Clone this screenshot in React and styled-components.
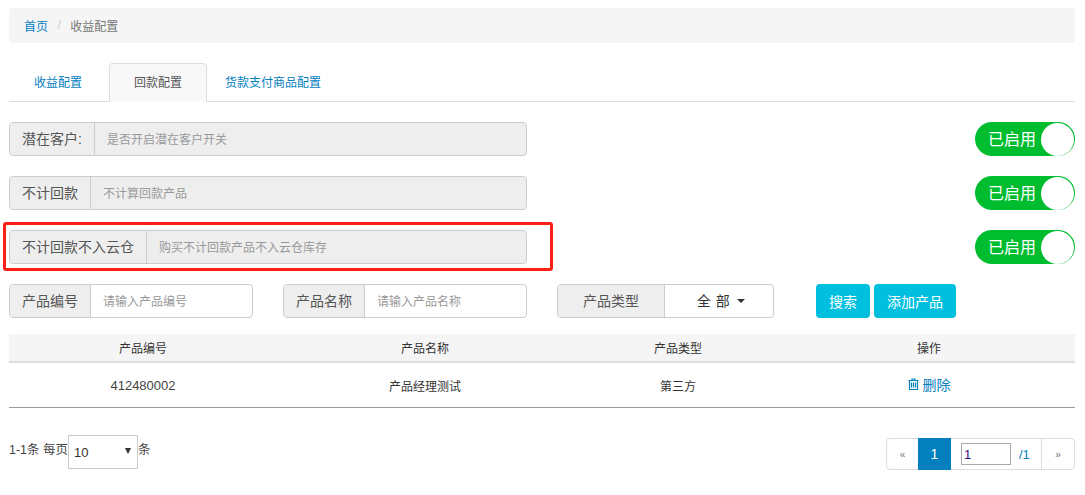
import React from 'react'
import styled, { createGlobalStyle } from 'styled-components'

const Global = createGlobalStyle`
    html, body {
        margin: 0;
        padding: 0;
        background: #fff;
        font-family: "Liberation Sans", "Noto Sans CJK SC", sans-serif;
        font-size: 13px;
        color: #333;
    }
    * { box-sizing: border-box; }
`
const Page = styled.div`
    width: 1085px;
    height: 495px;
    padding: 8px 10px 0 9px;
    overflow: hidden;
`
const Crumbs = styled.div`
    height: 35px;
    background: #f5f5f5;
    border-radius: 4px;
    padding: 0 15px 1px;
    display: flex;
    align-items: center;
    font-size: 12px;
`
const CrumbLink = styled.span`
    color: #0480be;
`
const CrumbSep = styled.span`
    color: #ccc;
    padding: 0 9.5px;
`
const CrumbNow = styled.span`
    color: #777;
`
const Tabs = styled.div`
    margin-top: 20px;
    height: 39px;
    display: flex;
    border-bottom: 1px solid #ddd;
`
const Tab = styled.div`
    height: 39px;
    padding: 0 24px 2px ${({$left}) => $left || 24}px;
    margin-right: 2px;
    display: flex;
    align-items: center;
    font-size: 12px;
    border-radius: 4px 4px 0 0;
    border: 1px solid ${({$active}) => $active ? '#ddd' : 'transparent'};
    border-bottom: 1px solid ${({$active}) => $active ? '#f8f8f8' : 'transparent'};
    background: ${({$active}) => $active ? '#f8f8f8' : 'transparent'};
    color: ${({$active}) => $active ? '#555' : '#0480be'};
`
const Settings = styled.div`
    margin-top: 20px;
    display: flex;
    flex-direction: column;
    gap: 20px;
`
const SettingRow = styled.div`
    position: relative;
    display: flex;
    justify-content: space-between;
    align-items: center;
    height: 34px;
`
const Group = styled.div`
    width: ${({$width}) => $width}px;
    height: 34px;
    display: flex;
    border: 1px solid #ccc;
    border-radius: 4px;
    overflow: hidden;
    background: ${({$disabled}) => $disabled ? '#eee' : '#fff'};
`
const Addon = styled.div`
    width: ${({$width}) => $width}px;
    flex: none;
    display: flex;
    align-items: center;
    justify-content: center;
    padding-bottom: 2px;
    background: #eee;
    border-right: 1px solid #ccc;
    color: #555;
    font-size: 14px;
    white-space: nowrap;
`
const Field = styled.div`
    flex: 1;
    display: flex;
    align-items: center;
    padding: 0 0 2px 12px;
    color: #999;
    font-size: 12px;
`
const Highlight = styled.div`
    position: absolute;
    left: -6px;
    top: -8px;
    width: 550px;
    height: 49px;
    border: 3px solid #fb1f14;
    border-radius: 3px;
    pointer-events: none;
`
const Switch = styled.div`
    width: 100px;
    height: 34px;
    border-radius: 17px;
    background: #00bc2f;
    display: flex;
    align-items: center;
    justify-content: space-between;
    padding: 0 1px 0 13px;
    color: #fff;
    font-size: 16px;
`
const SwitchLabel = styled.span`
    margin-top: -2px;
`
const Knob = styled.div`
    width: 33px;
    height: 33px;
    border-radius: 50%;
    background: #fff;
`
const Filters = styled.div`
    margin-top: 20px;
    height: 34px;
    display: flex;
    align-items: center;
`
const FilterGroup = styled(Group)`
    margin-right: 30px;
`
const TypeValue = styled.div`
    flex: 1;
    display: flex;
    align-items: center;
    justify-content: center;
    gap: 7px;
    padding: 0 0 2px 4px;
    color: #333;
    font-size: 14px;
    letter-spacing: 0.5px;
`
const Caret = styled.span`
    width: 0;
    height: 0;
    margin-top: 2px;
    border-top: 4px solid #333;
    border-left: 4px solid transparent;
    border-right: 4px solid transparent;
`
const Buttons = styled.div`
    display: flex;
    gap: 4px;
    margin-left: 12px;
`
const Button = styled.div`
    height: 34px;
    padding: 0 13px 1px;
    display: flex;
    align-items: center;
    background: #00bfdf;
    border-radius: 4px;
    color: #fff;
    font-size: 14px;
`
const Table = styled.div`
    margin-top: 16px;
    border-bottom: 1px solid #999;
`
const TableRow = styled.div`
    display: grid;
    grid-template-columns: 268px 296px 210px 292px;
    align-items: center;
    height: ${({$head}) => $head ? 29 : 44}px;
    background: ${({$head}) => $head ? '#f5f5f5' : '#fff'};
    border-bottom: ${({$head}) => $head ? '2px solid #ddd' : 'none'};
    font-size: 12px;
    color: #333;
`
const Cell = styled.div`
    text-align: center;
`
const Code = styled.span`
    font-size: 13px;
    color: #444;
`
const DeleteLink = styled.span`
    display: inline-flex;
    align-items: center;
    gap: 4px;
    margin-top: -2px;
    color: #0480be;
    font-size: 14px;
`
const Footer = styled.div`
    margin-top: 27px;
    display: flex;
    justify-content: space-between;
    align-items: flex-start;
`
const PageSize = styled.div`
    display: flex;
    align-items: flex-start;
    font-size: 12.5px;
    color: #444;
    line-height: 30px;
`
const SizeSelect = styled.div`
    width: 70px;
    height: 34px;
    border: 1px solid #ccc;
    display: flex;
    align-items: center;
    justify-content: space-between;
    padding: 2px 6px 0 5px;
    color: #333;
    font-size: 13px;
`
const SizeArrow = styled.span`
    width: 0;
    height: 0;
    margin-top: -4px;
    border-top: 6px solid #333;
    border-left: 3px solid transparent;
    border-right: 3px solid transparent;
`
const Pager = styled.div`
    margin-top: 3px;
    height: 32px;
    width: 189px;
    display: flex;
    border: 1px solid #ddd;
    border-radius: 4px;
`
const PagerArrow = styled.div`
    width: ${({$width}) => $width}px;
    flex: none;
    display: flex;
    align-items: center;
    justify-content: center;
    color: #777;
    font-size: 10px;
    border-left: ${({$split}) => $split ? '1px solid #ddd' : 'none'};
`
const PagerCurrent = styled.div`
    width: 33px;
    flex: none;
    margin: -1px 0;
    display: flex;
    align-items: center;
    justify-content: center;
    background: #0480be;
    color: #fff;
    font-size: 14px;
`
const PagerJump = styled.div`
    flex: 1;
    display: flex;
    align-items: center;
    padding-left: 10px;
    gap: 8px;
    font-size: 13px;
    color: #0480be;
`
const JumpInput = styled.div`
    width: 50px;
    height: 22px;
    border: 1px solid #a9a9a9;
    display: flex;
    align-items: center;
    padding-left: 2px;
    color: #3a0a80;
    font-size: 13px;
`

const settings = [
    { label: '潜在客户:', width: 85, text: '是否开启潜在客户开关' },
    { label: '不计回款', width: 81, text: '不计算回款产品' },
    { label: '不计回款不入云仓', width: 137, text: '购买不计回款产品不入云仓库存', marked: true },
]

function TrashIcon() {
    return (
        <svg width="11" height="12" viewBox="0 0 11 12" fill="none" stroke="#0480be" strokeWidth="1.2">
            <path d="M.5 2.5h10M4 2.5V1h3v1.5M1.5 2.5v9h8v-9M3.5 4.5v5M5.5 4.5v5M7.5 4.5v5" />
        </svg>
    )
}

function App() {
    return (
        <Page>
            <Global />
            <Crumbs>
                <CrumbLink>首页</CrumbLink>
                <CrumbSep>/</CrumbSep>
                <CrumbNow>收益配置</CrumbNow>
            </Crumbs>
            <Tabs>
                <Tab>收益配置</Tab>
                <Tab $active>回款配置</Tab>
                <Tab $left={15}>货款支付商品配置</Tab>
            </Tabs>
            <Settings>
                {settings.map((s) => (
                    <SettingRow key={s.label}>
                        <Group $width={518} $disabled>
                            <Addon $width={s.width}>{s.label}</Addon>
                            <Field>{s.text}</Field>
                        </Group>
                        <Switch>
                            <SwitchLabel>已启用</SwitchLabel>
                            <Knob />
                        </Switch>
                        {s.marked && <Highlight />}
                    </SettingRow>
                ))}
            </Settings>
            <Filters>
                <FilterGroup $width={244}>
                    <Addon $width={81}>产品编号</Addon>
                    <Field>请输入产品编号</Field>
                </FilterGroup>
                <FilterGroup $width={244}>
                    <Addon $width={81}>产品名称</Addon>
                    <Field>请输入产品名称</Field>
                </FilterGroup>
                <FilterGroup $width={217}>
                    <Addon $width={107}>产品类型</Addon>
                    <TypeValue>全 部 <Caret /></TypeValue>
                </FilterGroup>
                <Buttons>
                    <Button>搜索</Button>
                    <Button>添加产品</Button>
                </Buttons>
            </Filters>
            <Table>
                <TableRow $head>
                    <Cell>产品编号</Cell>
                    <Cell>产品名称</Cell>
                    <Cell>产品类型</Cell>
                    <Cell>操作</Cell>
                </TableRow>
                <TableRow>
                    <Cell><Code>412480002</Code></Cell>
                    <Cell>产品经理测试</Cell>
                    <Cell>第三方</Cell>
                    <Cell><DeleteLink><TrashIcon />删除</DeleteLink></Cell>
                </TableRow>
            </Table>
            <Footer>
                <PageSize>
                    1-1条 每页
                    <SizeSelect>10<SizeArrow /></SizeSelect>
                    条
                </PageSize>
                <Pager>
                    <PagerArrow $width={31}>«</PagerArrow>
                    <PagerCurrent>1</PagerCurrent>
                    <PagerJump>
                        <JumpInput>1</JumpInput>
                        /1
                    </PagerJump>
                    <PagerArrow $width={33} $split>»</PagerArrow>
                </Pager>
            </Footer>
        </Page>
    )
}

export default App
